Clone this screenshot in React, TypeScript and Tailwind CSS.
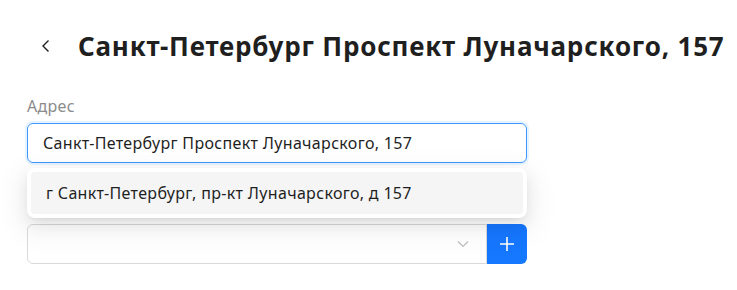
import React from "react";

const font = { fontFamily: '"Segoe UI", "Noto Sans", sans-serif' };

const App = () => {
  return (
    <div className="w-[737px] h-[290px] bg-white text-[#1f1f1f]" style={font}>
      <div className="flex items-center h-[92px] pl-[38px]">
        <svg width="16" height="16" viewBox="0 0 16 16" className="text-[#1f1f1f]">
          <path d="M10.5 2.5 L5 8 L10.5 13.5" fill="none" stroke="currentColor" strokeWidth="1.4" />
        </svg>
        <h1 className="ml-[24px] text-[26px] font-bold leading-none tracking-[0.8px]">
          Санкт-Петербург Проспект Луначарского, 157
        </h1>
      </div>
      <div className="pl-[27px] w-[527px]">
        <div className="text-[16px] text-[#8c8c8c] leading-[24px] pt-[2px] mb-[5px] tracking-[0.3px]">Адрес</div>
        <div className="h-[40px] rounded-[6px] border border-[#4096ff] shadow-[0_0_0_2px_rgba(5,145,255,0.1)] flex items-center pl-[15px] text-[16px] tracking-[0.33px]">
          Санкт-Петербург Проспект Луначарского, 157
        </div>
        <div className="relative h-[61px]">
          <div className="absolute left-0 right-0 top-[5px] z-10 bg-white rounded-[8px] p-[4px] shadow-[0_6px_16px_0_rgba(0,0,0,0.08),0_3px_6px_-4px_rgba(0,0,0,0.12),0_9px_28px_8px_rgba(0,0,0,0.05)]">
            <div className="h-[42px] bg-[#f5f5f5] rounded-[4px] flex items-center pl-[15px] text-[16px] text-[#1f1f1f] tracking-[0.33px]">
              г Санкт-Петербург, пр-кт Луначарского, д 157
            </div>
          </div>
        </div>
        <div className="flex h-[40px]">
          <div className="flex-1 border border-[#d9d9d9] rounded-l-[6px] flex items-center justify-end pr-[16px]">
            <svg width="14" height="14" viewBox="0 0 14 14" className="text-[#bfbfbf]">
              <path d="M2 4.5 L7 9.5 L12 4.5" fill="none" stroke="currentColor" strokeWidth="1.2" />
            </svg>
          </div>
          <button className="w-[40px] bg-[#1677ff] rounded-r-[6px] flex items-center justify-center">
            <svg width="18" height="18" viewBox="0 0 18 18">
              <path d="M9 2 V16 M2 9 H16" stroke="white" strokeWidth="1.6" />
            </svg>
          </button>
        </div>
      </div>
    </div>
  );
};

export default App;
